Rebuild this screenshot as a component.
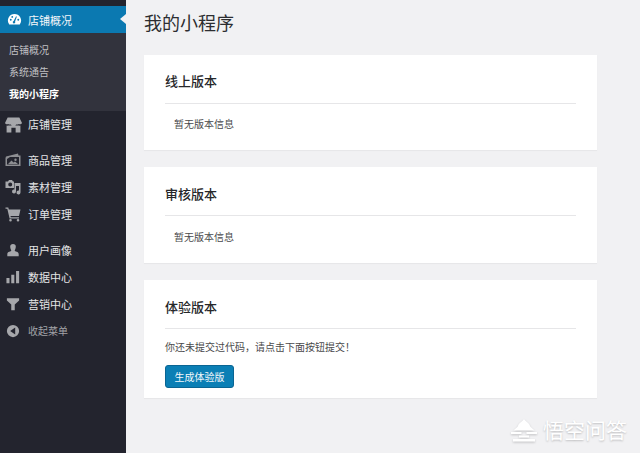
<div class="page">
  <aside class="side">
    <div class="active">
      <svg class="ic" viewBox="0 0 16 16" width="15" height="15"><path fill="#fff" fill-rule="evenodd" d="M8 2a7 7 0 0 0-6 10.600l.4.600h11.200l.4-.6A7 7 0 0 0 8 2zM4 9.200a1 1 0 1 1 0-2 1 1 0 0 1 0 2zm1.600-3a1 1 0 1 1 0-2 1 1 0 0 1 0 2zM8.600 10.200a1.300 1.300 0 1 1-1.500-.6l2.600-5 .8.4zM12 9.200a1 1 0 1 1 0-2 1 1 0 0 1 0 2z"/></svg>
      <span>店铺概况</span>
      <i class="notch"></i>
    </div>
    <div class="sub">
      <div class="sub-item">店铺概况</div>
      <div class="sub-item">系统通告</div>
      <div class="sub-item on">我的小程序</div>
    </div>
    <div class="item shop">
      <svg class="ic" viewBox="0 0 16 16" width="17" height="17"><path fill="#a6a7ab" d="M2.500 1.500h11L16 6.500a2 2 0 0 1-3 1 2.600 2.600 0 0 1-2.500.4 2.800 2.800 0 0 1-5 0A2.600 2.600 0 0 1 3 7.500a2 2 0 0 1-3-1zM1.500 9a3 3 0 0 0 1.500 0h10a3 3 0 0 0 1.500 0v6.500H10V11H6v4.500H1.500z"/></svg>
      <span>店铺管理</span>
    </div>
    <div class="group first">
      <div class="item">
        <svg class="ic" viewBox="0 0 16 16" width="16" height="16"><path fill="#8d8e92" d="M1 4.500 13 1.500l.5 2H15.500V14H.5V6zM2 7v5.500h12V5H5zm8.500-.5a1.200 1.200 0 1 1 0 2.400 1.200 1.200 0 0 1 0-2.400zM3 12l3.500-3.500L8.500 10.500l1.500-1 3 2.500z"/></svg>
        <span>商品管理</span>
      </div>
      <div class="item">
        <svg class="ic" viewBox="0 0 16 16" width="16" height="16"><path fill="#a6a7ab" fill-rule="evenodd" d="M.5 2.500H3l1-1.500h3l1 1.500h1V9H.5zM5.200 3.500a2 2 0 1 0 0 4 2 2 0 0 0 0-4zM14 4h1.500v9.500a2 2 0 1 1-1.500-2V7h-3V12.500a2 2 0 1 1-1.500-2V4z"/></svg>
        <span>素材管理</span>
      </div>
      <div class="item">
        <svg class="ic" viewBox="0 0 16 16" width="16" height="16"><path fill="#a6a7ab" d="M.5 1.500h2.800l.5 2H15.500l-1.500 6.500H5.500l.3 1.300H14v1.200H4.600L2.300 2.800H.5zM5.500 13a1.300 1.300 0 1 1 0 2.600 1.300 1.300 0 0 1 0-2.600zm7.500 0a1.300 1.300 0 1 1 0 2.600 1.300 1.300 0 0 1 0-2.600z"/></svg>
        <span>订单管理</span>
      </div>
    </div>
    <div class="group">
      <div class="item">
        <svg class="ic small" viewBox="0 0 16 16" width="14" height="14"><path fill="#a6a7ab" d="M8 1a3.200 3.200 0 0 1 3.200 3.300C11.200 6.500 10 8 10 8.800c0 .8 4.500 1 4.500 3.700V15h-13v-2.500C1.500 9.800 6 9.600 6 8.800 6 8 4.800 6.500 4.800 4.300A3.200 3.200 0 0 1 8 1z"/></svg>
        <span>用户画像</span>
      </div>
      <div class="item">
        <svg class="ic small" viewBox="0 0 16 16" width="14" height="14"><path fill="#a6a7ab" d="M.5 9H4v6H.5zM6 5.500h3.500V15H6zM11.500 1H15v14h-3.500z"/></svg>
        <span>数据中心</span>
      </div>
      <div class="item">
        <svg class="ic small" viewBox="0 0 16 16" width="14" height="14"><path fill="#a6a7ab" d="M1 1.500h14v2.500L10 8.500V15H6V8.500L1 4z"/></svg>
        <span>营销中心</span>
      </div>
      <div class="item fold">
        <svg class="ic small" viewBox="0 0 16 16" width="14" height="14"><path fill="#a6a7ab" fill-rule="evenodd" d="M8 1a7 7 0 1 1 0 14A7 7 0 0 1 8 1zM10.500 4 4.800 8l5.700 4z"/></svg>
        <span>收起菜单</span>
      </div>
    </div>
  </aside>

  <main class="main">
    <h1>我的小程序</h1>
    <section class="card online">
      <h2>线上版本</h2>
      <p class="none">暂无版本信息</p>
    </section>
    <section class="card">
      <h2>审核版本</h2>
      <p class="none">暂无版本信息</p>
    </section>
    <section class="card last">
      <h2>体验版本</h2>
      <p class="tip">你还未提交过代码，请点击下面按钮提交！</p>
      <button type="button">生成体验版</button>
    </section>
    <div class="mark">
      <svg viewBox="0 0 28 24" width="28" height="24"><path fill="#fff" d="M14 0c1.500 2.500 5 3.500 6 7 .4 1.500 3 2.500 4.500 4.500H3.500C5 9.500 7.600 8.500 8 7c1-3.500 4.500-4.500 6-7zM1 13h10.500v2H1zM16.500 13H27v2H16.500zM9 16.500h10v2H9zM3 20h22v2.500H3z"/></svg>
      <span>悟空问答</span>
    </div>
  </main>
</div>

<style>
  :global(body) {
    margin: 0;
    background: #f1f1f3;
  }

  .page {
    display: flex;
    width: 640px;
    height: 453px;
    overflow: hidden;
    font-family: "Liberation Sans", "Noto Sans CJK SC", sans-serif;
    background: #f1f1f3;
  }

  .side {
    width: 126px;
    flex: none;
    box-sizing: border-box;
    padding-top: 6px;
    background: #23242e;
    color: #e4e4e6;
    font-size: 11px;
  }

  .active {
    position: relative;
    display: flex;
    align-items: center;
    gap: 6px;
    height: 27px;
    padding-left: 7px;
    background: #0b79b1;
    color: #f3f7fa;
  }

  .notch {
    position: absolute;
    right: 0;
    top: 8px;
    border: 5px solid transparent;
    border-right: 6px solid #f1f1f3;
    border-left: 0;
  }

  .sub {
    box-sizing: content-box;
    padding: 6px 0 5px;
    height: 67px;
    background: #32333d;
  }

  .sub-item {
    height: 22px;
    line-height: 23px;
    padding-left: 9px;
    font-size: 10px;
    color: #c0c0c4;
  }

  .sub-item.on {
    color: #fff;
    font-weight: 700;
  }

  .item {
    display: flex;
    align-items: center;
    gap: 7px;
    height: 27px;
    padding-left: 5px;
  }

  .item .ic {
    flex: none;
  }

  .item .small {
    margin: 0 0 0 1px;
    padding-right: 1px;
  }

  .shop {
    height: 26px;
    gap: 6px;
  }

  .group {
    margin-top: 9px;
  }

  .fold {
    color: #a2a3a8;
    font-size: 10px;
  }

  .main {
    position: relative;
    flex: 1;
    box-sizing: border-box;
    padding: 0 0 0 18px;
  }

  h1 {
    margin: 0;
    height: 55px;
    padding-top: 12px;
    box-sizing: border-box;
    font-size: 18px;
    line-height: 25px;
    font-weight: 400;
    color: #2c2d30;
  }

  .card {
    box-sizing: border-box;
    width: 453px;
    height: 96px;
    margin-bottom: 17px;
    padding: 0 21px;
    background: #fff;
    box-shadow: 0 1px 1px rgba(0, 0, 0, 0.04);
  }

  .card.online {
    height: 95px;
  }

  .card.last {
    height: 118px;
  }

  h2 {
    margin: 0;
    height: 49px;
    line-height: 56px;
    box-sizing: border-box;
    border-bottom: 1px solid #e6e6e8;
    font-size: 13px;
    font-weight: 500;
    color: #26272a;
  }

  .online h2 {
    line-height: 54px;
  }

  .none {
    margin: 0;
    padding-left: 9px;
    font-size: 10px;
    line-height: 44px;
    color: #4a4a4c;
  }

  .online .none {
    line-height: 42px;
  }

  .tip {
    margin: 0;
    padding-top: 2px;
    font-size: 10px;
    line-height: 34px;
    color: #4a4a4c;
  }

  button {
    display: block;
    width: 69px;
    height: 23px;
    padding: 0;
    background: #0b7fb5;
    border: 1px solid #0a6593;
    border-radius: 3px;
    color: #f4f8fb;
    font: inherit;
    font-size: 10px;
  }

  .mark {
    position: absolute;
    left: 384px;
    top: 417px;
    display: flex;
    align-items: center;
    gap: 5px;
    color: #fff;
    font-size: 21px;
    line-height: 28px;
    text-shadow: 0 1px 2px rgba(0, 0, 0, 0.22);
  }

  .mark svg {
    filter: drop-shadow(0 1px 1px rgba(0, 0, 0, 0.2));
  }
</style>
